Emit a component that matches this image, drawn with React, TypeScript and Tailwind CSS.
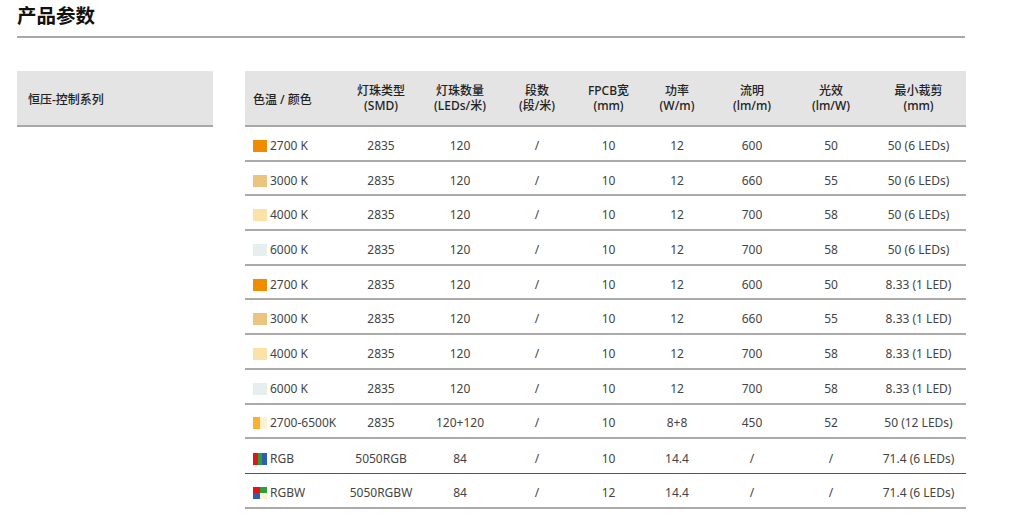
const font = { fontFamily: '"Noto Sans", "Noto Sans CJK SC", sans-serif' };

type Row = {
  swatch: string;
  name: string;
  smd: string;
  leds: string;
  seg: string;
  fpcb: string;
  watt: string;
  lm: string;
  eff: string;
  cut: string;
  dark?: boolean;
};

const rows: Row[] = [
  { swatch: 'o27', name: '2700 K', smd: '2835', leds: '120', seg: '/', fpcb: '10', watt: '12', lm: '600', eff: '50', cut: '50 (6 LEDs)' },
  { swatch: 'o30', name: '3000 K', smd: '2835', leds: '120', seg: '/', fpcb: '10', watt: '12', lm: '660', eff: '55', cut: '50 (6 LEDs)' },
  { swatch: 'o40', name: '4000 K', smd: '2835', leds: '120', seg: '/', fpcb: '10', watt: '12', lm: '700', eff: '58', cut: '50 (6 LEDs)' },
  { swatch: 'o60', name: '6000 K', smd: '2835', leds: '120', seg: '/', fpcb: '10', watt: '12', lm: '700', eff: '58', cut: '50 (6 LEDs)' },
  { swatch: 'o27', name: '2700 K', smd: '2835', leds: '120', seg: '/', fpcb: '10', watt: '12', lm: '600', eff: '50', cut: '8.33 (1 LED)' },
  { swatch: 'o30', name: '3000 K', smd: '2835', leds: '120', seg: '/', fpcb: '10', watt: '12', lm: '660', eff: '55', cut: '8.33 (1 LED)' },
  { swatch: 'o40', name: '4000 K', smd: '2835', leds: '120', seg: '/', fpcb: '10', watt: '12', lm: '700', eff: '58', cut: '8.33 (1 LED)' },
  { swatch: 'o60', name: '6000 K', smd: '2835', leds: '120', seg: '/', fpcb: '10', watt: '12', lm: '700', eff: '58', cut: '8.33 (1 LED)' },
  { swatch: 'cct', name: '2700-6500K', smd: '2835', leds: '120+120', seg: '/', fpcb: '10', watt: '8+8', lm: '450', eff: '52', cut: '50 (12 LEDs)' },
  { swatch: 'rgb', name: 'RGB', smd: '5050RGB', leds: '84', seg: '/', fpcb: '10', watt: '14.4', lm: '/', eff: '/', cut: '71.4 (6 LEDs)', dark: true },
  { swatch: 'rgbw', name: 'RGBW', smd: '5050RGBW', leds: '84', seg: '/', fpcb: '12', watt: '14.4', lm: '/', eff: '/', cut: '71.4 (6 LEDs)' },
];

const grid = 'grid grid-cols-[95px_82px_76px_78px_65px_72px_78px_80px_95px] items-center';

function Swatch({ kind }: { kind: string }) {
  if (kind === 'o27') return <span className="w-[14px] h-[12px] bg-[#f08c00] shrink-0" />;
  if (kind === 'o30') return <span className="w-[14px] h-[12px] bg-[#ebc47f] shrink-0" />;
  if (kind === 'o40') return <span className="w-[14px] h-[12px] bg-[#fbe2a6] shrink-0" />;
  if (kind === 'o60') return <span className="w-[14px] h-[12px] bg-[#e7efee] shrink-0" />;
  if (kind === 'cct')
    return (
      <span className="flex w-[14px] h-[12px] shrink-0">
        <span className="w-[7px] bg-[#fbb031]" />
        <span className="w-[7px] bg-[#fdf2cf]" />
      </span>
    );
  if (kind === 'rgb')
    return (
      <span className="flex w-[14px] h-[12px] shrink-0">
        <span className="w-[5px] bg-[#e3141b]" />
        <span className="w-[4px] bg-[#2e9d3a]" />
        <span className="w-[5px] bg-[#2d5fb0]" />
      </span>
    );
  return (
    <span className="grid grid-cols-2 grid-rows-2 w-[14px] h-[12px] shrink-0">
      <span className="bg-[#e3141b]" />
      <span className="bg-[#2e9d3a]" />
      <span className="bg-[#2d5fb0]" />
      <span className="bg-[#fdf2cf]" />
    </span>
  );
}

const headers = [
  ['灯珠类型', '(SMD)'],
  ['灯珠数量', '(LEDs/米)'],
  ['段数', '(段/米)'],
  ['FPCB宽', '(mm)'],
  ['功率', '(W/m)'],
  ['流明', '(lm/m)'],
  ['光效', '(lm/W)'],
  ['最小裁剪', '(mm)'],
];

export default function App() {
  return (
    <div className="bg-white w-[1024px] h-[523px] overflow-hidden text-[#333]" style={font}>
      <div className="px-[17px] pt-[3px]">
        <h1 className="text-[19.5px] leading-[26px] font-bold text-[#111]">产品参数</h1>
        <div className="mt-[7px] w-[948px] h-[2px] bg-[#a8a8a8]" />
      </div>

      <div className="flex mt-[33px] pl-[17px]">
        <div className="w-[196px] h-[56px] bg-[#e4e4e4] border-b-2 border-[#a8a8a8] flex items-center pl-[11px] pt-[3px]">
          <span className="text-[12px] font-medium text-[#222]">恒压-控制系列</span>
        </div>

        <div className="ml-[32px] w-[721px]">
          <div className={`${grid} h-[56px] bg-[#e4e4e4] border-b-2 border-[#a8a8a8] text-[12px] leading-[16px] font-medium text-[#222]`}>
            <div className="pl-[8px] pt-[3px]">色温 / 颜色</div>
            {headers.map(([a, b]) => (
              <div key={a} className="text-center -mt-[1px]">
                <div className="leading-[15px]">{a}</div>
                <div className="leading-[15px]">{b}</div>
              </div>
            ))}
          </div>

          {rows.map((r, i) => (
            <div
              key={i}
              className={`${grid} h-[34.7px] pt-[5px] text-[12px] text-[#444] ${r.dark ? 'border-b border-[#555]' : 'border-b-2 border-[#aaa]'}`}
            >
              <div className="flex items-center gap-[3px] pl-[8px]">
                <Swatch kind={r.swatch} />
                <span>{r.name}</span>
              </div>
              <div className="text-center">{r.smd}</div>
              <div className="text-center">{r.leds}</div>
              <div className="text-center">{r.seg}</div>
              <div className="text-center">{r.fpcb}</div>
              <div className="text-center">{r.watt}</div>
              <div className="text-center">{r.lm}</div>
              <div className="text-center">{r.eff}</div>
              <div className="text-center">{r.cut}</div>
            </div>
          ))}
        </div>
      </div>
    </div>
  );
}
